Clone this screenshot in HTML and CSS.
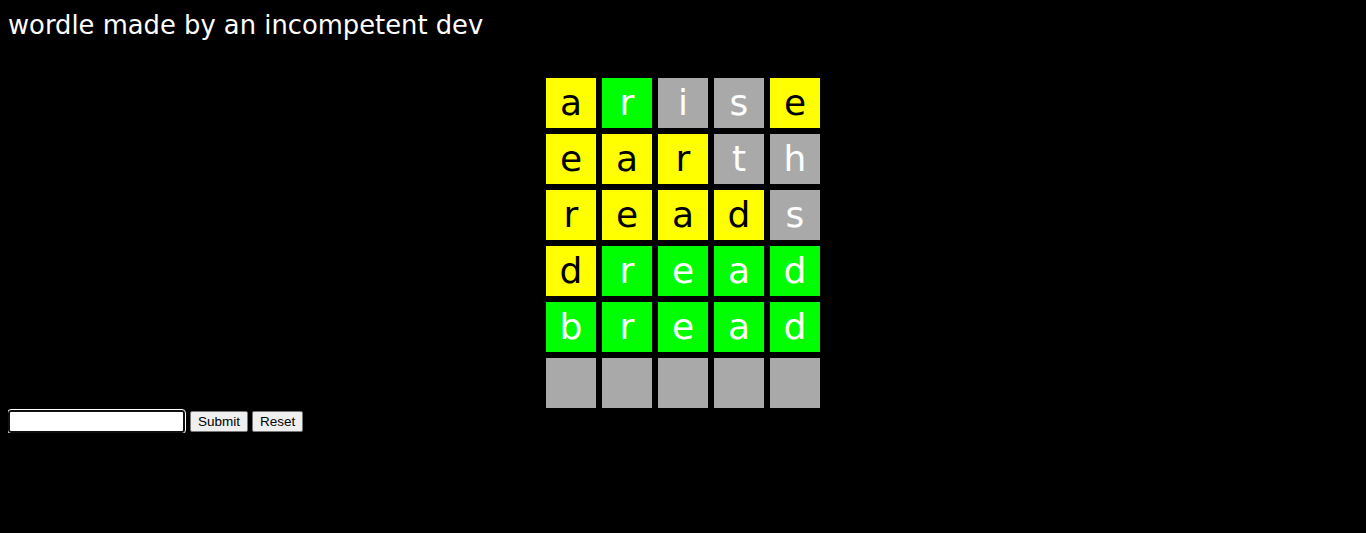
FILE: index.html
```html
<!DOCTYPE html>
<html>
<head>
<meta charset="utf-8">
<link rel="stylesheet" href="styles.css">
</head>
<body>
<div class="title">wordle made by an incompetent dev</div>
<div class="board">
  <div class="tile yellow">a</div><div class="tile green">r</div><div class="tile gray">i</div><div class="tile gray">s</div><div class="tile yellow">e</div>
  <div class="tile yellow">e</div><div class="tile yellow">a</div><div class="tile yellow">r</div><div class="tile gray">t</div><div class="tile gray">h</div>
  <div class="tile yellow">r</div><div class="tile yellow">e</div><div class="tile yellow">a</div><div class="tile yellow">d</div><div class="tile gray">s</div>
  <div class="tile yellow">d</div><div class="tile green">r</div><div class="tile green">e</div><div class="tile green">a</div><div class="tile green">d</div>
  <div class="tile green">b</div><div class="tile green">r</div><div class="tile green">e</div><div class="tile green">a</div><div class="tile green">d</div>
  <div class="tile gray"></div><div class="tile gray"></div><div class="tile gray"></div><div class="tile gray"></div><div class="tile gray"></div>
</div>
<div class="controls">
  <input class="guess" type="text"><button class="btn">Submit</button><button class="btn">Reset</button>
</div>
</body>
</html>
```
FILE: styles.css
```css
html, body {
  background: #000;
}
body {
  margin: 8px;
  font-family: "DejaVu Sans", sans-serif;
}
.title {
  color: #fff;
  font-size: 25.8px;
  line-height: 34px;
  height: 34px;
}
.board {
  display: grid;
  grid-template-columns: repeat(5, 50px);
  grid-auto-rows: 50px;
  gap: 6px;
  width: 274px;
  margin: 36px auto 2px;
}
.tile {
  display: flex;
  align-items: center;
  justify-content: center;
  font-size: 36px;
  color: #fff;
  line-height: 1;
  padding-bottom: 1px;
  box-sizing: border-box;
}
.yellow { background: #ffff00; color: #000; }
.green { background: #00ff00; color: #fff; }
.gray { background: #a9a9a9; color: #fff; }
.controls {
  display: flex;
  align-items: center;
  gap: 4px;
  height: 23px;
}
.guess {
  box-sizing: border-box;
  width: 177px;
  height: 23px;
  margin: 0 1px 0 0;
  padding: 0;
  border: 2px solid #101010;
  border-radius: 3px;
  outline: 1px solid #fff;
  outline-offset: 0;
  background: #fff;
}
.btn {
  box-sizing: border-box;
  height: 21px;
  margin: 0;
  padding: 0 7px;
  font-family: "Liberation Sans", Arial, sans-serif;
  font-size: 13.5px;
  color: #000;
  background: #efefef;
  border: 1px solid #767676;
  border-radius: 2px;
}
```
